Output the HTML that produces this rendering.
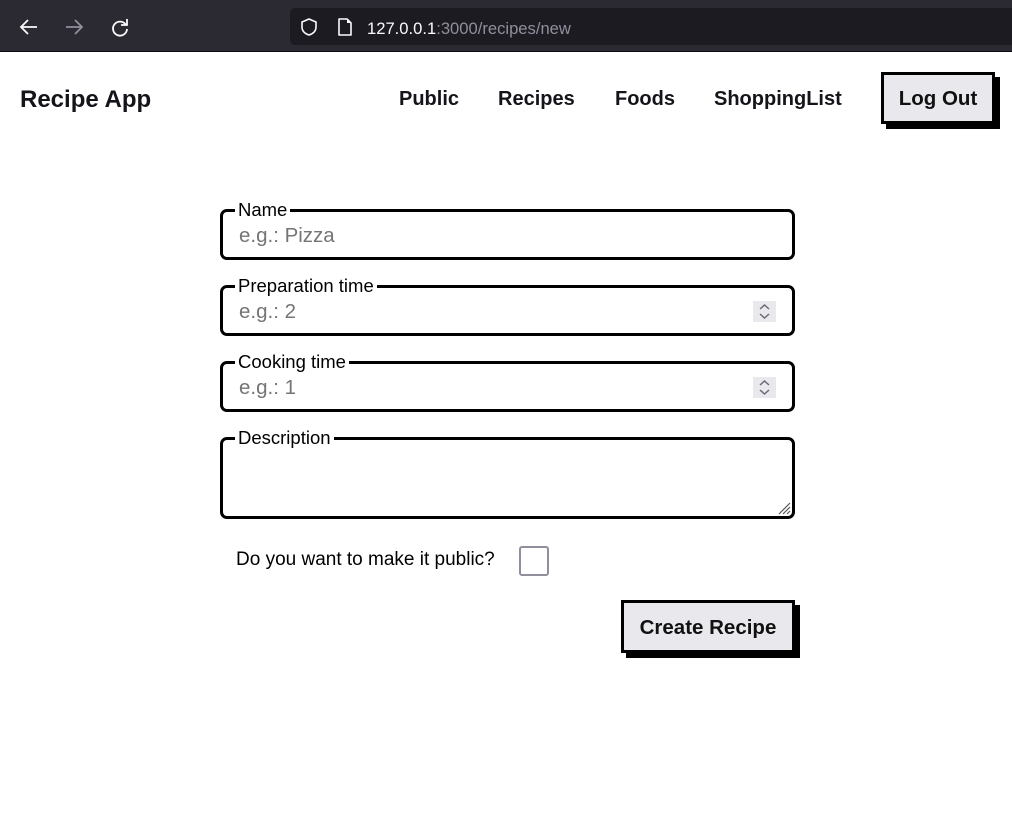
<!DOCTYPE html>
<html><head><style>
*{margin:0;padding:0;box-sizing:border-box}
body{width:1012px;height:837px;position:relative;background:#fff;font-family:"Liberation Sans",sans-serif;overflow:hidden}
.chrome{position:absolute;left:0;top:0;width:1012px;height:52px;background:#2b2a33;border-bottom:1px solid #0c0c0d}
.url{position:absolute;left:290px;top:8px;width:730px;height:37px;background:#1c1b22;border-radius:5px}
.urltext{position:absolute;left:367px;top:19px;font-size:16.6px;color:#fbfbfe}
.urltext span{color:#8f8f9d}
.a{position:absolute}
.nav{position:absolute;top:88px;font-size:20px;font-weight:bold;color:#15141a}
.btn{position:absolute;background:#e9e8ed;border:3px solid #000;box-shadow:5px 5px 0 #000;font-weight:bold;color:#111;font-size:20.5px;display:flex;align-items:center;justify-content:center;padding-top:2px}
.field{position:absolute;left:220px;width:575px;border:3px solid #000;border-radius:7px}
.lbl{position:absolute;left:12px;top:-12px;background:#fff;padding:0 3px 0 3px;font-size:18.5px;color:#000;line-height:20px}
.ph{position:absolute;left:16px;font-size:20.5px;color:#757575}
.spin{position:absolute;right:16px;top:13px;width:23px;height:21px;background:#e9e9ed}
</style></head><body>
<div class="chrome">
<svg class="a" style="left:18px;top:16px" width="22" height="22" viewBox="0 0 22 22"><path d="M19 11H4M10 4l-7 7 7 7" stroke="#fbfbfe" stroke-width="1.8" fill="none"/></svg>
<svg class="a" style="left:63px;top:16px" width="22" height="22" viewBox="0 0 22 22"><path d="M3 11h15M12 4l7 7-7 7" stroke="#8f8f9d" stroke-width="1.8" fill="none"/></svg>
<svg class="a" style="left:109px;top:16px" width="22" height="22" viewBox="0 0 22 22"><path d="M17 9A7 7 0 1 0 18 13M18 3v6h-6" stroke="#fbfbfe" stroke-width="1.8" fill="none"/></svg>
<div class="url"></div>
<svg class="a" style="left:299px;top:17px" width="20" height="20" viewBox="0 0 20 20"><path d="M10 2L3 5v5c0 4 3 7 7 8 4-1 7-4 7-8V5z" stroke="#fbfbfe" stroke-width="1.6" fill="none"/></svg>
<svg class="a" style="left:336px;top:17px" width="18" height="20" viewBox="0 0 18 20"><path d="M3 2h8l4 4v12H3z" stroke="#fbfbfe" stroke-width="1.6" fill="none" stroke-linejoin="round"/><path d="M11 2v4h4" fill="#fbfbfe"/></svg>
<div class="urltext">127.0.0.1<span>:3000/recipes/new</span></div>
</div>
<div class="a" style="left:20px;top:86px;font-size:24px;font-weight:bold;color:#15141a">Recipe App</div>
<div class="nav" style="left:399px">Public</div>
<div class="nav" style="left:498px">Recipes</div>
<div class="nav" style="left:615px">Foods</div>
<div class="nav" style="left:714px">ShoppingList</div>
<div class="btn" style="left:881px;top:72px;width:114px;height:52px">Log Out</div>

<div class="field" style="top:209px;height:51px"><div class="lbl">Name</div><div class="ph" style="top:12px">e.g.: Pizza</div></div>
<div class="field" style="top:285px;height:51px"><div class="lbl">Preparation time</div><div class="ph" style="top:12px">e.g.: 2</div>
<div class="spin"><svg width="23" height="21" viewBox="0 0 23 21"><path d="M7 8l4.5-4 4.5 4M7 13l4.5 4 4.5-4" stroke="#6a6a78" stroke-width="1.5" fill="none"/></svg></div></div>
<div class="field" style="top:361px;height:51px"><div class="lbl">Cooking time</div><div class="ph" style="top:12px">e.g.: 1</div>
<div class="spin"><svg width="23" height="21" viewBox="0 0 23 21"><path d="M7 8l4.5-4 4.5 4M7 13l4.5 4 4.5-4" stroke="#6a6a78" stroke-width="1.5" fill="none"/></svg></div></div>
<div class="field" style="top:437px;height:82px"><div class="lbl">Description</div>
<svg class="a" style="right:1px;bottom:1px" width="16" height="16" viewBox="0 0 16 16"><path d="M15 4L4 15M15 8L8 15M15 12L12 15" stroke="#555" stroke-width="1.2"/></svg></div>

<div class="a" style="left:236px;top:549px;font-size:19px;color:#000">Do you want to make it public?</div>
<div class="a" style="left:519px;top:546px;width:30px;height:30px;border:2px solid #8f8f9d;border-radius:3px"></div>
<div class="btn" style="left:621px;top:600px;width:174px;height:53px">Create Recipe</div>
</body></html>
